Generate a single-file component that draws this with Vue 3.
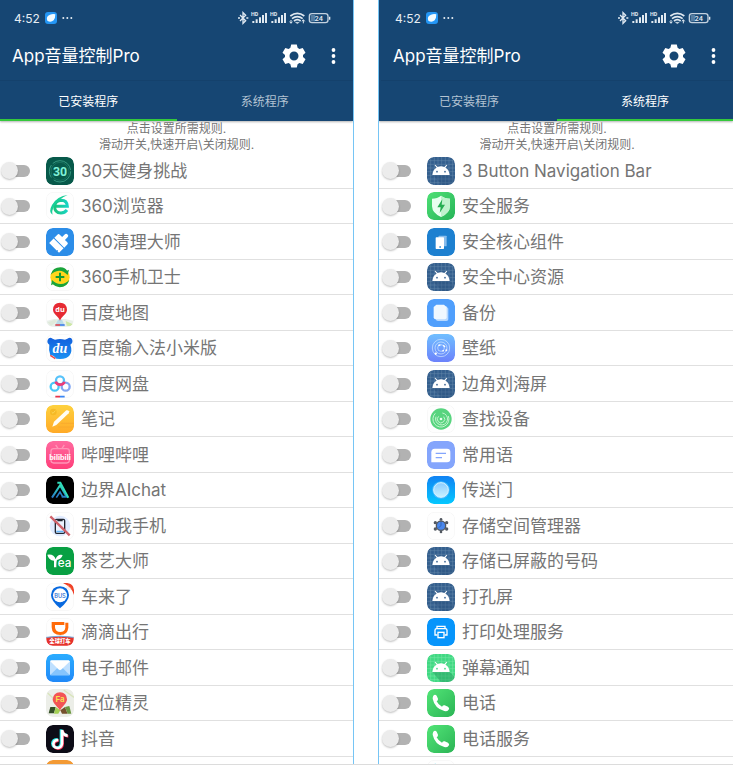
<script setup>
import { reactive } from 'vue'

const base = (fill) => `<rect width="84" height="84" rx="20" fill="${fill}"/>`
const blank = '<rect x="1" y="1" width="82" height="82" rx="19" fill="#fefefe" stroke="#f1f1f1" stroke-width="2"/>'
const grad = (id, from, to, x2 = 0, y2 = 1) =>
  `<linearGradient id="${id}" x1="0" y1="0" x2="${x2}" y2="${y2}"><stop offset="0" stop-color="${from}"/><stop offset="1" stop-color="${to}"/></linearGradient>`

const robotHead =
  '<path d="M16 54C17 42 22 35 29 32L23 25 25 23 32 30Q42 26 52 30L59 23 61 25 55 32C62 35 67 42 68 54Z" fill="#fff"/>'
const gridLines =
  'M11 0V84M22 0V84M33 0V84M44 0V84M55 0V84M66 0V84M77 0V84M0 11H84M0 22H84M0 33H84M0 44H84M0 55H84M0 66H84M0 77H84'

const android =
  base('#355f8e') +
  `<path d="${gridLines}" stroke="#7595b5" stroke-width="1.5" opacity=".8"/>` +
  '<path d="M16 54H68L84 68V84H46Z" fill="#2a4f7c" opacity=".35"/>' +
  robotHead +
  '<circle cx="30" cy="44" r="2.5" fill="#355f8e"/><circle cx="54" cy="44" r="2.5" fill="#355f8e"/>'

const phone =
  grad('gPhone', '#52e577', '#2bb455', 1, 1) +
  base('url(#gPhone)') +
  '<path d="M19 20Q24 15 29 20L33 29Q34 34 29 37Q34 48 45 53Q48 48 53 49L63 53Q69 57 65 62Q60 68 52 66Q23 58 17 29Q17 23 19 20Z" fill="#fff"/>'

const art = {
  thirty:
    base('#07594a') +
    '<circle cx="42" cy="43" r="32" fill="none" stroke="#4fb79b" stroke-width="2" stroke-dasharray="70 10 40 6"/><circle cx="42" cy="43" r="27" fill="none" stroke="#237f69" stroke-width="2"/>' +
    '<text x="42" y="56" text-anchor="middle" font-family="Liberation Sans Narrow, Roboto, sans-serif" font-weight="700" font-size="37" fill="#80f2d7">30</text>',
  browser:
    blank +
    grad('gE', '#19c37d', '#18d4c4', 1, 0) +
    '<path d="M27 43H64Q63 25 46 25Q27 26 26 44Q26 62 45 63Q56 63 63 54" fill="none" stroke="url(#gE)" stroke-width="9"/><path d="M20 68Q6 61 18 39Q34 12 65 9Q38 20 25 42Q16 57 20 68Z" fill="#18cf98"/>',
  cleaner:
    base('#2c8de8') +
    '<g transform="rotate(45 42 42)" fill="#fff"><path d="M36 15Q36 10 42 10Q48 10 48 15V27H58Q63 27 63 32V45H21V32Q21 27 26 27H36Z"/><path d="M21 48H63V67H57L55 63 53 67H21Z"/></g>',
  guard:
    blank +
    '<circle cx="42" cy="43" r="29" fill="#ffd51c"/><path d="M14 35Q20 13 44 13Q58 14 63 23L69 20 65 36Q51 22 39 23Q24 24 14 35Z" fill="#19a43b"/><path d="M70 50Q64 72 41 73Q28 72 21 64L15 67 18 51Q31 64 45 63Q60 62 70 50Z" fill="#19a43b"/><path d="M42 29V55M29 42H55" stroke="#139c32" stroke-width="6"/>',
  maps:
    blank +
    '<path d="M3 65L24 60 58 60 81 65V70Q79 83 65 83H20Q5 83 3 70Z" fill="#e9f0ea"/><path d="M5 70L26 62 34 66 15 81Z" fill="#dfeadb"/><path d="M59 66L81 76 74 82 62 80Z" fill="#cde7a7"/><path d="M36 62H48L57 82H26Z" fill="#b9dce8"/>' +
    '<path d="M42 65C38 51 21 46 21 32Q22 11 42 11Q62 11 63 32C63 46 46 51 42 65Z" fill="#e62a33"/><text x="42" y="38" text-anchor="middle" font-family="Open Sans, sans-serif" font-weight="700" font-size="22" fill="#fff">du</text><path d="M28 78H42" stroke="#e23a45" stroke-width="4"/><path d="M42 78H56" stroke="#3877e8" stroke-width="4"/>',
  baiduIme:
    blank +
    grad('gBear', '#1260dd', '#1b91f3') +
    '<path d="M10 32Q2 27 5 18Q10 7 20 14L27 17Q42 13 57 17L64 14Q75 7 79 18Q81 28 73 32Q80 51 71 64Q64 75 42 75Q20 75 13 64Q7 50 10 32Z" fill="url(#gBear)"/>' +
    '<text x="42" y="57" text-anchor="middle" font-family="Liberation Serif, serif" font-style="italic" font-weight="700" font-size="42" fill="#fff">du</text><path d="M13 64Q24 63 31 76L18 72Z" fill="#fff"/><path d="M13 64L28 74" stroke="#e94747" stroke-width="4"/>',
  netdisk:
    blank +
    '<circle cx="26" cy="50" r="12" fill="none" stroke="#48c7f7" stroke-width="7"/><circle cx="59" cy="50" r="12" fill="none" stroke="#82a7f3" stroke-width="7"/><circle cx="42" cy="31" r="12" fill="none" stroke="#58c3fa" stroke-width="7"/><path d="M29 35Q32 44 42 44Q53 44 55 35" fill="none" stroke="#ee3c78" stroke-width="8"/><path d="M28 80H42" stroke="#e7344a" stroke-width="5"/><path d="M42 80H56" stroke="#3b87f5" stroke-width="5"/>',
  notes:
    grad('gNote', '#fed13e', '#ffaa28') +
    base('url(#gNote)') +
    '<circle cx="22" cy="21" r="10" fill="#f6b925"/><path d="M17 21L21 25 28 17" fill="none" stroke="#fbd351" stroke-width="3"/><path d="M44 55H84M36 66H84" stroke="#f6a62c" stroke-width="2"/><path d="M19 65L24 50 61 16Q66 14 69 19Q70 22 68 25L31 60Z" fill="#fffdf5"/>',
  bilibili:
    grad('gBili', '#ff6a9f', '#ff3f7a') +
    base('url(#gBili)') +
    '<rect x="15" y="23" width="55" height="43" rx="8" fill="none" stroke="#ff94b7" stroke-width="4"/><path d="M29 12L36 22M55 12L48 22" stroke="#ff94b7" stroke-width="4"/><text x="42" y="56" text-anchor="middle" font-family="Lato, sans-serif" font-weight="900" font-size="24" fill="#fff">bilibili</text>',
  aichat:
    base('#000') +
    grad('gAi', '#2fe0ba', '#2876c8', 0, 1) +
    '<path d="M18 65L42 28L62 62H47" fill="none" stroke="url(#gAi)" stroke-width="6"/><path d="M34 20H43L67 65" fill="none" stroke="#30dcba" stroke-width="6"/><path d="M31 65L42 48L50 62" fill="none" stroke="#277cc4" stroke-width="5"/>',
  noTouch:
    blank +
    '<circle cx="42" cy="42" r="31" fill="#e0ebff"/><rect x="28" y="22" width="28" height="42" rx="4" fill="#eaf2ff" stroke="#202632" stroke-width="4"/><path d="M34 24H50V28H34Z" fill="#202632"/><path d="M31 56H53V61H31Z" fill="#65b4f8"/><path d="M13 13L71 70" stroke="#cf626b" stroke-width="7"/>',
  tea:
    base('#08a043') +
    '<path d="M4 23Q24 20 29 37Q34 20 50 24Q47 36 33 39Q31 43 31 61H24Q24 47 24 41Q8 39 4 23Z" fill="#fff"/><text x="56" y="60" text-anchor="middle" font-family="Inter, sans-serif" font-weight="500" font-size="35" fill="#fff">ea</text>',
  bus:
    blank +
    '<path d="M51 0H65Q84 1 84 20V36Q78 12 51 0Z" fill="#ef4128"/><text x="68" y="20" text-anchor="middle" transform="rotate(42 70 16)" font-family="Inter, sans-serif" font-size="11" fill="#ffd2bf">GO</text>' +
    '<path d="M42 76Q15 53 15 36Q17 11 42 10Q67 11 69 36Q69 53 42 76Z" fill="#0869df"/><circle cx="42" cy="37" r="21" fill="#fff"/><text x="42" y="44" text-anchor="middle" font-family="Inter, sans-serif" font-weight="500" font-size="17" fill="#236bd2">BUS</text>',
  didi:
    blank +
    '<path d="M17 12H55V21H27V28Q28 42 43 42Q56 42 58 29V14H67V29Q65 50 43 51Q18 51 17 28Z" fill="#ff6a09"/><path d="M1 58Q42 51 83 58V66Q80 83 64 83H20Q2 82 1 66Z" fill="#e6332c"/><path d="M1 58Q42 51 83 58" fill="none" stroke="#68aee5" stroke-width="3"/><text x="42" y="76" text-anchor="middle" font-family="Noto Sans CJK SC, sans-serif" font-weight="900" font-size="16" fill="#fff">全球打车</text>',
  mail:
    grad('gMail', '#2aacff', '#2189f8') +
    base('url(#gMail)') +
    '<rect x="12" y="20" width="60" height="44" rx="4" fill="#bfe0ff"/><path d="M12 64L34 42H50L72 64Z" fill="#85c4fd"/><path d="M12 21Q14 19 17 19H68L72 22 47 46Q42 51 37 46Z" fill="#fff"/>',
  locator:
    base('#eceee8') +
    '<path d="M5 12L30 36M53 3L84 25" stroke="#dae5bd" stroke-width="4"/><path d="M13 54H29L24 73H8Z" fill="#354f27"/><path d="M29 54L43 64 37 74H24Z" fill="#a2cf53"/><path d="M43 64L57 54 65 74H48Z" fill="#75502d"/><path d="M57 54L70 51 76 74H65Z" fill="#6b9740"/><path d="M42 65C36 53 20 44 20 31Q22 11 42 10Q62 11 63 31C63 44 47 53 42 65Z" fill="#f35454"/><text x="42" y="40" text-anchor="middle" font-family="Inter, sans-serif" font-weight="600" font-size="24" fill="#f6e64c">Fa</text>',
  douyin:
    base('#0d0c17') +
    '<g fill="none" stroke-width="8"><path d="M45 13V54Q44 67 33 67Q20 67 19 55Q20 43 35 43M45 13Q47 29 63 30" stroke="#26e6e5"/><path d="M50 17V58Q48 71 37 71Q25 70 24 59Q25 47 38 47M50 17Q52 33 67 34" stroke="#f63257"/><path d="M48 15V56Q46 69 35 69Q23 68 22 57Q23 45 37 45M48 15Q50 31 65 32" stroke="#fff"/></g>',
  orange: base('#f39a35'),
  android,
  shield:
    grad('gShield', '#4fe076', '#26b458', 1, 1) +
    base('url(#gShield)') +
    '<path d="M42 11Q53 20 69 20V43Q68 64 42 75Q16 64 15 43V20Q31 20 42 11Z" fill="#e8fff0"/><path d="M42 11Q53 20 69 20V43Q68 64 42 75Z" fill="#bff2cd"/><path d="M46 22L31 46H41L38 63 54 38H44Z" fill="#25ad52"/>',
  core:
    base('#1d80d0') +
    '<rect x="35" y="23" width="24" height="32" rx="2" fill="#89bdec"/><rect x="26" y="28" width="25" height="35" rx="2" fill="#fff"/><rect x="37" y="55" width="5" height="4" fill="#1d80d0"/>',
  backup:
    base('#509ffc') +
    '<path d="M30 22H58L64 29V61Q64 66 58 66H32Q26 65 26 60Z" fill="#b6d8ff"/><path d="M28 17H51L59 25V55Q59 61 53 61H26Q20 61 20 55V24Z" fill="#f0f8ff"/>',
  wallpaper:
    grad('gWall', '#70bfff', '#6c82fb') +
    base('url(#gWall)') +
    '<g fill="none" stroke="#d8ebff" stroke-width="2"><circle cx="42" cy="42" r="26"/><circle cx="42" cy="42" r="18"/><circle cx="42" cy="42" r="10"/></g><path d="M34 34L40 33M49 34L54 39M51 50L46 51M28 56L25 61" stroke="#fff" stroke-width="4"/><circle cx="58" cy="49" r="3" fill="#fff"/><circle cx="26" cy="59" r="3" fill="#fff"/>',
  finder:
    blank +
    '<circle cx="42" cy="42" r="32" fill="#58d47f"/><g fill="none" stroke="#c5f4d0" stroke-width="3"><path d="M64 33A24 24 0 1 1 25 25"/><path d="M46 24A18 18 0 1 1 27 35"/><path d="M50 35A11 11 0 1 1 35 34"/></g><circle cx="42" cy="42" r="4" fill="#eafff0"/>',
  phrases:
    base('#84a5fc') +
    '<path d="M23 23H60Q70 23 70 33V54Q70 64 60 64H13V34Q13 23 23 23Z" fill="#fff"/><path d="M26 37H57M26 50H45" stroke="#84a5fc" stroke-width="4"/>',
  portal:
    grad('gPort', '#1182f3', '#05c8ff') +
    grad('gOrb', '#8ccdff', '#c9f1ff') +
    base('url(#gPort)') +
    '<circle cx="42" cy="42" r="26" fill="#4bbcff"/><circle cx="42" cy="42" r="22" fill="url(#gOrb)" stroke="#d6f2ff" stroke-width="3"/>',
  storage:
    blank +
    '<circle cx="42" cy="41" r="14" fill="#4a87ec" stroke="#525861" stroke-width="4"/><g fill="#525861"><circle cx="42" cy="22" r="4"/><circle cx="42" cy="60" r="4"/><circle cx="25" cy="32" r="5"/><circle cx="59" cy="32" r="5"/><circle cx="25" cy="51" r="5"/><circle cx="59" cy="51" r="5"/></g><path d="M42 30V41L34 48" fill="none" stroke="#2f66bd" stroke-width="3"/>',
  printer:
    base('#0795fb') +
    '<g fill="none" stroke="#fff" stroke-width="4"><path d="M30 32V25H54V32"/><path d="M31 51H24V37Q24 32 29 32H55Q60 32 60 37V51H53"/><rect x="33" y="43" width="18" height="16"/></g>',
  danmaku:
    base('#40d983') +
    `<path d="${gridLines}" stroke="#7ce7ab" stroke-width="1.5"/>` +
    '<path d="M16 54H68L84 70V84H42Z" fill="#269e60" opacity=".5"/>' +
    robotHead +
    '<circle cx="30" cy="44" r="2.5" fill="#40d983"/><circle cx="54" cy="44" r="2.5" fill="#40d983"/>',
  phone,
  droplet: blank + '<circle cx="25" cy="16" r="5" fill="#48d3e8"/>',
}

const rows = (entries) => entries.map(([icon, name]) => ({ icon, name, on: false }))

const panels = reactive([
  {
    key: 'installed',
    active: 0,
    apps: rows([
      ['thirty', '30天健身挑战'],
      ['browser', '360浏览器'],
      ['cleaner', '360清理大师'],
      ['guard', '360手机卫士'],
      ['maps', '百度地图'],
      ['baiduIme', '百度输入法小米版'],
      ['netdisk', '百度网盘'],
      ['notes', '笔记'],
      ['bilibili', '哔哩哔哩'],
      ['aichat', '边界AIchat'],
      ['noTouch', '别动我手机'],
      ['tea', '茶艺大师'],
      ['bus', '车来了'],
      ['didi', '滴滴出行'],
      ['mail', '电子邮件'],
      ['locator', '定位精灵'],
      ['douyin', '抖音'],
      ['orange', ''],
    ]),
  },
  {
    key: 'system',
    active: 1,
    apps: rows([
      ['android', '3 Button Navigation Bar'],
      ['shield', '安全服务'],
      ['core', '安全核心组件'],
      ['android', '安全中心资源'],
      ['backup', '备份'],
      ['wallpaper', '壁纸'],
      ['android', '边角刘海屏'],
      ['finder', '查找设备'],
      ['phrases', '常用语'],
      ['portal', '传送门'],
      ['storage', '存储空间管理器'],
      ['android', '存储已屏蔽的号码'],
      ['android', '打孔屏'],
      ['printer', '打印处理服务'],
      ['danmaku', '弹幕通知'],
      ['phone', '电话'],
      ['phone', '电话服务'],
      ['droplet', ''],
    ]),
  },
])

const tabs = ['已安装程序', '系统程序']
</script>

<template>
  <main class="page">
    <section v-for="panel in panels" :key="panel.key" class="panel" :class="`panel--${panel.key}`">
      <header class="head">
        <div class="status">
          <span class="clock">4:52</span>
          <svg class="badge" viewBox="0 0 36 36" aria-hidden="true">
            <rect width="36" height="36" rx="9" fill="#2496f5" />
            <path d="M7 26Q2 12 15 8Q24 4 31 7Q31 19 26 25Q17 33 7 26Z" fill="#f2fbff" />
          </svg>
          <svg class="more" viewBox="0 0 33 6" aria-hidden="true" fill="#e6edf3">
            <circle cx="4" cy="3" r="3" /><circle cx="16" cy="3" r="3" /><circle cx="28" cy="3" r="3" />
          </svg>
          <svg class="indicators" viewBox="0 0 288 42" aria-hidden="true">
            <g fill="none" stroke="#e0e9f1" stroke-width="4">
              <path d="M9 12L26 29L18 37V5L26 13L9 30" />
              <path d="M3 21H9M28 21H34" stroke-width="5" />
            </g>
            <g v-for="x in [42, 99]" :key="x" :transform="`translate(${x} 0)`">
              <text x="0" y="14" font-family="Roboto, sans-serif" font-weight="700" font-size="16" fill="#e0e9f1">HD</text>
              <path d="M7 36V30M17 36V25M27 36V19M36 36V12M45 36V6" stroke="#e0e9f1" stroke-width="6" />
            </g>
            <g fill="none" stroke="#e0e9f1" stroke-width="5">
              <path d="M160 15Q181 -1 202 15M165 23Q181 11 197 23M171 30Q181 22 191 30" />
              <path d="M175 34H187L181 38Z" fill="#e0e9f1" stroke-width="1" />
              <path d="M162 27V36M158 32L162 37 166 32M199 37V27M195 31L199 26 203 31" stroke-width="3" />
            </g>
            <rect x="217" y="8" width="56" height="27" rx="8" fill="none" stroke="#c3d1df" stroke-width="4" />
            <path d="M221 12H234V31H221Z" fill="#557ca1" />
            <path d="M278 17V26" stroke="#e0e9f1" stroke-width="4" />
            <text x="245" y="29" text-anchor="middle" font-family="Roboto, sans-serif" font-weight="500" font-size="22" fill="#e6edf3">24</text>
          </svg>
        </div>
        <div class="bar">
          <h1 class="title">App音量控制Pro</h1>
          <button class="tool tool--gear" type="button" aria-label="设置">
            <svg viewBox="0 0 24 24" aria-hidden="true">
              <path
                fill="#fff"
                fill-rule="evenodd"
                d="M9.2.5h5.6l.8 3.3 1.8 1.1 3.3-1 2.8 4.9-2.5 2.2v2l2.5 2.2-2.8 4.9-3.3-1-1.8 1.1-.8 3.3H9.2l-.8-3.3-1.8-1.1-3.3 1-2.8-4.9L3 13V11L.5 8.8l2.8-4.9 3.3 1 1.8-1.1ZM12 7.5a4.500 4.500 0 1 0 0 9a4.500 4.500 0 1 0 0-9Z"
              />
            </svg>
          </button>
          <button class="tool tool--menu" type="button" aria-label="更多">
            <svg viewBox="0 0 4 16" aria-hidden="true" fill="#fff">
              <circle cx="2" cy="2" r="1.9" /><circle cx="2" cy="8" r="1.9" /><circle cx="2" cy="14" r="1.9" />
            </svg>
          </button>
        </div>
        <nav class="tabs" role="tablist">
          <button
            v-for="(tab, i) in tabs"
            :key="tab"
            class="tab"
            :class="{ 'tab--on': panel.active === i }"
            type="button"
            role="tab"
            :aria-selected="panel.active === i"
            @click="panel.active = i"
          >
            {{ tab }}
          </button>
        </nav>
      </header>

      <p class="hint">点击设置所需规则.<br />滑动开关,快速开启\关闭规则.</p>

      <ul class="list">
        <li v-for="(app, i) in panel.apps" :key="i" class="row">
          <input :id="`${panel.key}-${i}`" v-model="app.on" class="switch" type="checkbox" role="switch" />
          <label class="app" :for="`${panel.key}-${i}`">
            <svg class="icon" viewBox="0 0 84 84" aria-hidden="true" v-html="art[app.icon]"></svg>
            <span class="name">{{ app.name }}</span>
          </label>
        </li>
      </ul>
    </section>
  </main>
</template>

<style>
body {
  margin: 0;
  background: #fff;
}
</style>

<style scoped>
.page {
  box-sizing: border-box;
  display: grid;
  grid-template-columns: 354fr 355fr;
  gap: 24px;
  height: 100vh;
  border-bottom: 1px solid #dcdcdc;
  overflow: hidden;
  font-family: Inter, "Noto Sans CJK SC", sans-serif;
}
.panel {
  --inset: 0px;
  display: flex;
  flex-direction: column;
  min-width: 0;
  min-height: 0;
  overflow: hidden;
}
.panel--installed {
  border-right: 1px solid #76c5f5;
}
.panel--system {
  --inset: 2px;
  border-left: 1px solid #76c5f5;
}
.head {
  flex: none;
  padding-left: var(--inset);
  background: #164673;
  box-shadow: 0 1px 2px rgba(0, 0, 0, 0.3);
  color: #fff;
}
.status {
  display: flex;
  align-items: center;
  height: 36px;
  padding: 0 20px 0 14px;
}
.clock {
  font-size: 12px;
  color: #e6edf3;
}
.badge {
  width: 12px;
  height: 12px;
  margin-left: 5px;
}
.more {
  width: 11px;
  height: 2px;
  margin-left: 5px;
}
.indicators {
  width: 96px;
  height: 14px;
  margin-left: auto;
}
.bar {
  display: flex;
  align-items: center;
  height: 40px;
  padding: 0 17px 4px 12px;
  border-bottom: 1px solid #14416c;
}
.title {
  flex: 1;
  margin: 0;
  font-size: 17px;
  font-weight: 400;
  line-height: 24px;
}
.tool {
  display: flex;
  padding: 0;
  border: 0;
  background: none;
}
.tool--gear svg {
  width: 24px;
  height: 24px;
}
.tool--menu {
  margin-left: 25px;
}
.tool--menu svg {
  width: 5px;
  height: 16px;
}
.tabs {
  display: grid;
  grid-template-columns: 1fr 1fr;
  height: 40px;
}
.tab {
  padding: 0;
  border: 0;
  border-bottom: 2px solid transparent;
  background: none;
  color: #b3c3d2;
  font-family: inherit;
  font-size: 12px;
}
.tab--on {
  border-bottom-color: #35c83c;
  color: #fff;
}
.hint {
  margin: 0;
  padding-left: var(--inset);
  color: #757575;
  font-size: 12px;
  line-height: 16px;
  text-align: center;
}
.list {
  display: grid;
  grid-auto-rows: 36px 35px;
  flex: 1;
  min-height: 0;
  margin: 0;
  padding: 0;
  overflow: hidden;
  list-style: none;
}
.row {
  display: flex;
  align-items: center;
  padding-left: var(--inset);
  border-bottom: 1px solid #e0e0e0;
}
.switch {
  flex: none;
  display: grid;
  align-items: center;
  width: 29px;
  height: 18px;
  margin: 0 0 0 1px;
  appearance: none;
}
.switch::before,
.switch::after {
  grid-area: 1 / 1;
  content: "";
}
.switch::before {
  height: 12px;
  margin-left: 4px;
  border-radius: 6px;
  background: #b2b2b2;
}
.switch::after {
  width: 17px;
  height: 17px;
  border-radius: 50%;
  background: #ececec;
  box-shadow: 0 1px 2px rgba(0, 0, 0, 0.25);
}
.switch:checked::before {
  background: #9ae39d;
}
.switch:checked::after {
  justify-self: end;
  background: #35c83c;
}
.app {
  display: flex;
  flex: 1;
  align-items: center;
  gap: 7px;
  min-width: 0;
  margin-left: 16px;
}
.icon {
  flex: none;
  width: 28px;
  height: 28px;
  border-radius: 7px;
  overflow: hidden;
}
.name {
  color: #757575;
  font-size: 17px;
  line-height: 24px;
  white-space: nowrap;
}
</style>
